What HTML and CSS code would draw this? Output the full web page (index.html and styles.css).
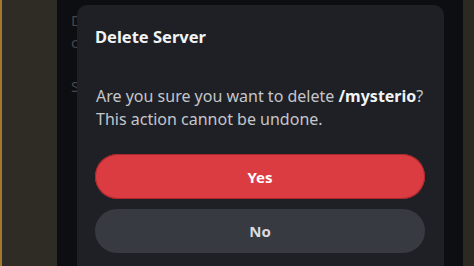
FILE: index.html
```html
<!DOCTYPE html>
<html lang="en">
<head>
  <meta charset="UTF-8" />
  <title>Delete Server</title>
  <link rel="stylesheet" href="styles.css">
</head>
<body>
  <div class="screen">
    <aside class="side-panel"></aside>
    <main class="backdrop">
      <div class="backdrop-list">
        <span class="row-d">D</span>
        <span class="row-c">c</span>
        <span class="row-s">S</span>
      </div>
    </main>
    <aside class="side-strip"></aside>
  </div>

  <div class="modal">
    <h2 class="modal-title">Delete Server</h2>
    <p class="modal-text">Are you sure you want to delete <b>/mysterio</b>?<br>This action cannot be undone.</p>
    <div class="modal-actions">
      <button class="btn btn-danger">Yes</button>
      <button class="btn btn-muted">No</button>
    </div>
  </div>
</body>
</html>
```

FILE: styles.css
```css
body {
  margin: 0;
  width: 474px;
  height: 266px;
  overflow: hidden;
  background: #0c0d10;
  font-family: "Noto Sans", "Open Sans", sans-serif;
  position: relative;
}

.screen {
  display: flex;
  height: 266px;
}

.side-panel {
  width: 55px;
  border-left: 2px solid #a37a2c;
  background: #2f2b25;
}

.backdrop {
  flex: 1;
  background: #0d0e11;
}

.backdrop-list {
  display: flex;
  flex-direction: column;
  padding: 10px 0 0 14px;
  font-size: 15px;
  color: #45474d;
}

.row-c {
  margin-top: 2px;
}

.row-s {
  margin-top: 24px;
}

.side-strip {
  width: 11px;
  background: #2c2922;
}

/* modal sits over the page */
.modal {
  position: absolute;
  top: 5px;
  bottom: 0;
  left: 77px;
  width: 367px;
  box-sizing: border-box;
  padding: 22px 18px 0 18px;
  background: #1f2025;
  border-radius: 10px 10px 0 0;
}

.modal-title {
  margin: 0;
  font-size: 16.5px;
  font-weight: bold;
  color: #f2f3f5;
  line-height: 20px;
}

.modal-text {
  margin: 38px 0 0 1px;
  font-size: 16px;
  line-height: 23px;
  color: #c4c6cb;
}

.modal-text b {
  color: #f2f3f5;
}

.modal-actions {
  display: flex;
  flex-direction: column;
  gap: 10px;
  margin-top: 23px;
  padding-right: 1px;
}

.btn {
  height: 45px;
  border: none;
  border-radius: 23px;
  font-family: inherit;
  font-size: 15px;
  font-weight: bold;
}

.btn-danger {
  background: #db3c42;
  color: #ffffff;
  box-shadow: inset 0 0 0 1px #a8282d;
}

.btn-muted {
  background: #383a41;
  color: #d9dbdf;
  height: 44px;
}
```
